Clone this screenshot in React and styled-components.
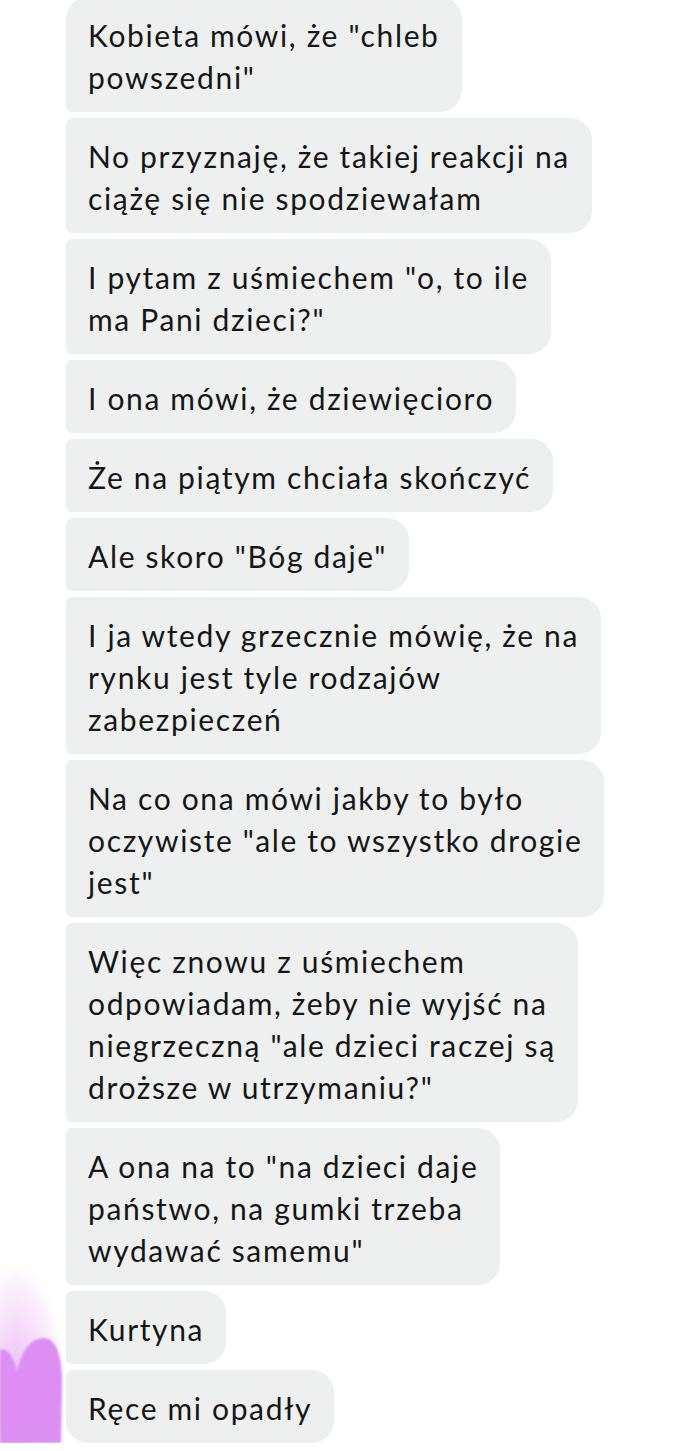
import React from "react";
import styled, { createGlobalStyle } from "styled-components";

const GlobalStyle = createGlobalStyle`
  html, body {
    margin: 0;
    padding: 0;
    background: #ffffff;
  }
  body {
    font-family: "Lato", "Liberation Sans", sans-serif;
  }
`;

const Screen = styled.div`
  width: 700px;
  height: 1451px;
  overflow: hidden;
  background: #ffffff;
`;

const Thread = styled.div`
  display: flex;
  align-items: stretch;
`;

const Gutter = styled.div`
  width: 66px;
  flex-shrink: 0;
  display: flex;
  align-items: flex-end;
`;

const Messages = styled.div`
  display: flex;
  flex-direction: column;
  align-items: flex-start;
  gap: 6px;
  margin-top: -3px;
`;

const Bubble = styled.div`
  background: #edf0ee;
  color: #161616;
  font-size: 30px;
  letter-spacing: 1.65px;
  line-height: 42px;
  padding: 17px 22px 14px 22px;
  white-space: nowrap;
  border-radius: ${p => (p.$first ? "22px" : "6px")} 22px 22px
    ${p => (p.$last ? "22px" : "6px")};
`;

const messages = [
  ["Kobieta mówi, że \"chleb", "powszedni\""],
  ["No przyznaję, że takiej reakcji na", "ciążę się nie spodziewałam"],
  ["I pytam z uśmiechem \"o, to ile", "ma Pani dzieci?\""],
  ["I ona mówi, że dziewięcioro"],
  ["Że na piątym chciała skończyć"],
  ["Ale skoro \"Bóg daje\""],
  [
    "I ja wtedy grzecznie mówię, że na",
    "rynku jest tyle rodzajów",
    "zabezpieczeń"
  ],
  [
    "Na co ona mówi jakby to było",
    "oczywiste \"ale to wszystko drogie",
    "jest\""
  ],
  [
    "Więc znowu z uśmiechem",
    "odpowiadam, żeby nie wyjść na",
    "niegrzeczną \"ale dzieci raczej są",
    "droższe w utrzymaniu?\""
  ],
  [
    "A ona na to \"na dzieci daje",
    "państwo, na gumki trzeba",
    "wydawać samemu\""
  ],
  ["Kurtyna"],
  ["Ręce mi opadły"]
];

// blurry avatar peeking in at the bottom-left corner
const Avatar = () => (
  <svg width="66" height="175" viewBox="0 0 66 175">
    <defs>
      <radialGradient id="glow" cx="0.25" cy="0.72" r="0.8">
        <stop offset="0" stopColor="#e9b4f4" />
        <stop offset="0.45" stopColor="#f4d9f8" />
        <stop offset="0.8" stopColor="#fcf3fd" />
        <stop offset="1" stopColor="#ffffff" stopOpacity="0" />
      </radialGradient>
      <filter id="soft" x="-20%" y="-20%" width="140%" height="140%">
        <feGaussianBlur stdDeviation="0.8" />
      </filter>
    </defs>
    <rect x="0" y="0" width="66" height="175" fill="url(#glow)" />
    <path
      d="M0 82 C8 79 14 90 17 104 C21 84 30 70 44 70 C56 70 62 88 62 112 L61 175 L0 175 Z"
      fill="#dd8ef3"
      filter="url(#soft)"
    />
  </svg>
);

const App = () => (
  <Screen>
    <GlobalStyle />
    <Thread>
      <Gutter>
        <Avatar />
      </Gutter>
      <Messages>
        {messages.map((lines, i) => (
          <Bubble key={i} $first={i === 0} $last={i === messages.length - 1}>
            {lines.map((line, j) => (
              <React.Fragment key={j}>
                {j > 0 && <br />}
                {line}
              </React.Fragment>
            ))}
          </Bubble>
        ))}
      </Messages>
    </Thread>
  </Screen>
);

export default App;
